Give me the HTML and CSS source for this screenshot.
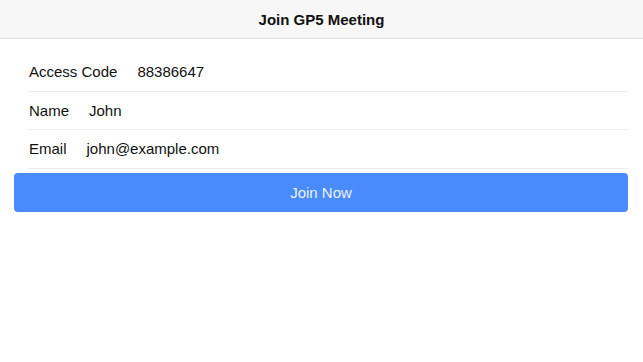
FILE: index.html
```html
<!DOCTYPE html>
<html>
<head>
  <meta charset="utf-8">
  <title>Join GP5 Meeting</title>
  <link rel="stylesheet" href="styles.css">
</head>
<body>
  <div class="nav-bar">
    <div class="nav-title">Join GP5 Meeting</div>
  </div>

  <div class="join-form">
    <div class="field-row">
      <span class="field-label">Access Code</span>
      <span class="field-value">88386647</span>
    </div>
    <div class="field-row">
      <span class="field-label">Name</span>
      <span class="field-value">John</span>
    </div>
    <div class="field-row">
      <span class="field-label">Email</span>
      <span class="field-value">john@example.com</span>
    </div>
  </div>

  <button class="join-btn">Join Now</button>
</body>
</html>
```

FILE: styles.css
```css
* {
  margin: 0;
  padding: 0;
  box-sizing: border-box;
}

body {
  background: #fff;
  font-family: "Liberation Sans", Arial, sans-serif;
  color: #111;
}

/* Kopfzeile */
.nav-bar {
  height: 39px;
  background: #f7f7f7;
  border-bottom: 1px solid #dcdcdc;
  display: flex;
  align-items: center;
  justify-content: center;
}

.nav-title {
  font-size: 15px;
  font-weight: bold;
  padding-top: 1px;
}

.join-form {
  padding-top: 14px;
  margin: 0 15px 0 28px;
}

.field-row {
  height: 38.5px;
  display: flex;
  align-items: center;
  gap: 20px;
  font-size: 15px;
  padding-left: 1px;
  border-bottom: 1px solid #ececec;
}

.join-btn {
  display: block;
  margin: 4px 15px 0 14px;
  width: calc(100% - 29px);
  height: 39px;
  background: #4a8bfc;
  color: rgba(255, 255, 255, 0.92);
  border: none;
  border-radius: 4px;
  font-family: "Liberation Sans", Arial, sans-serif;
  font-size: 15px;
  cursor: pointer;
}
```
